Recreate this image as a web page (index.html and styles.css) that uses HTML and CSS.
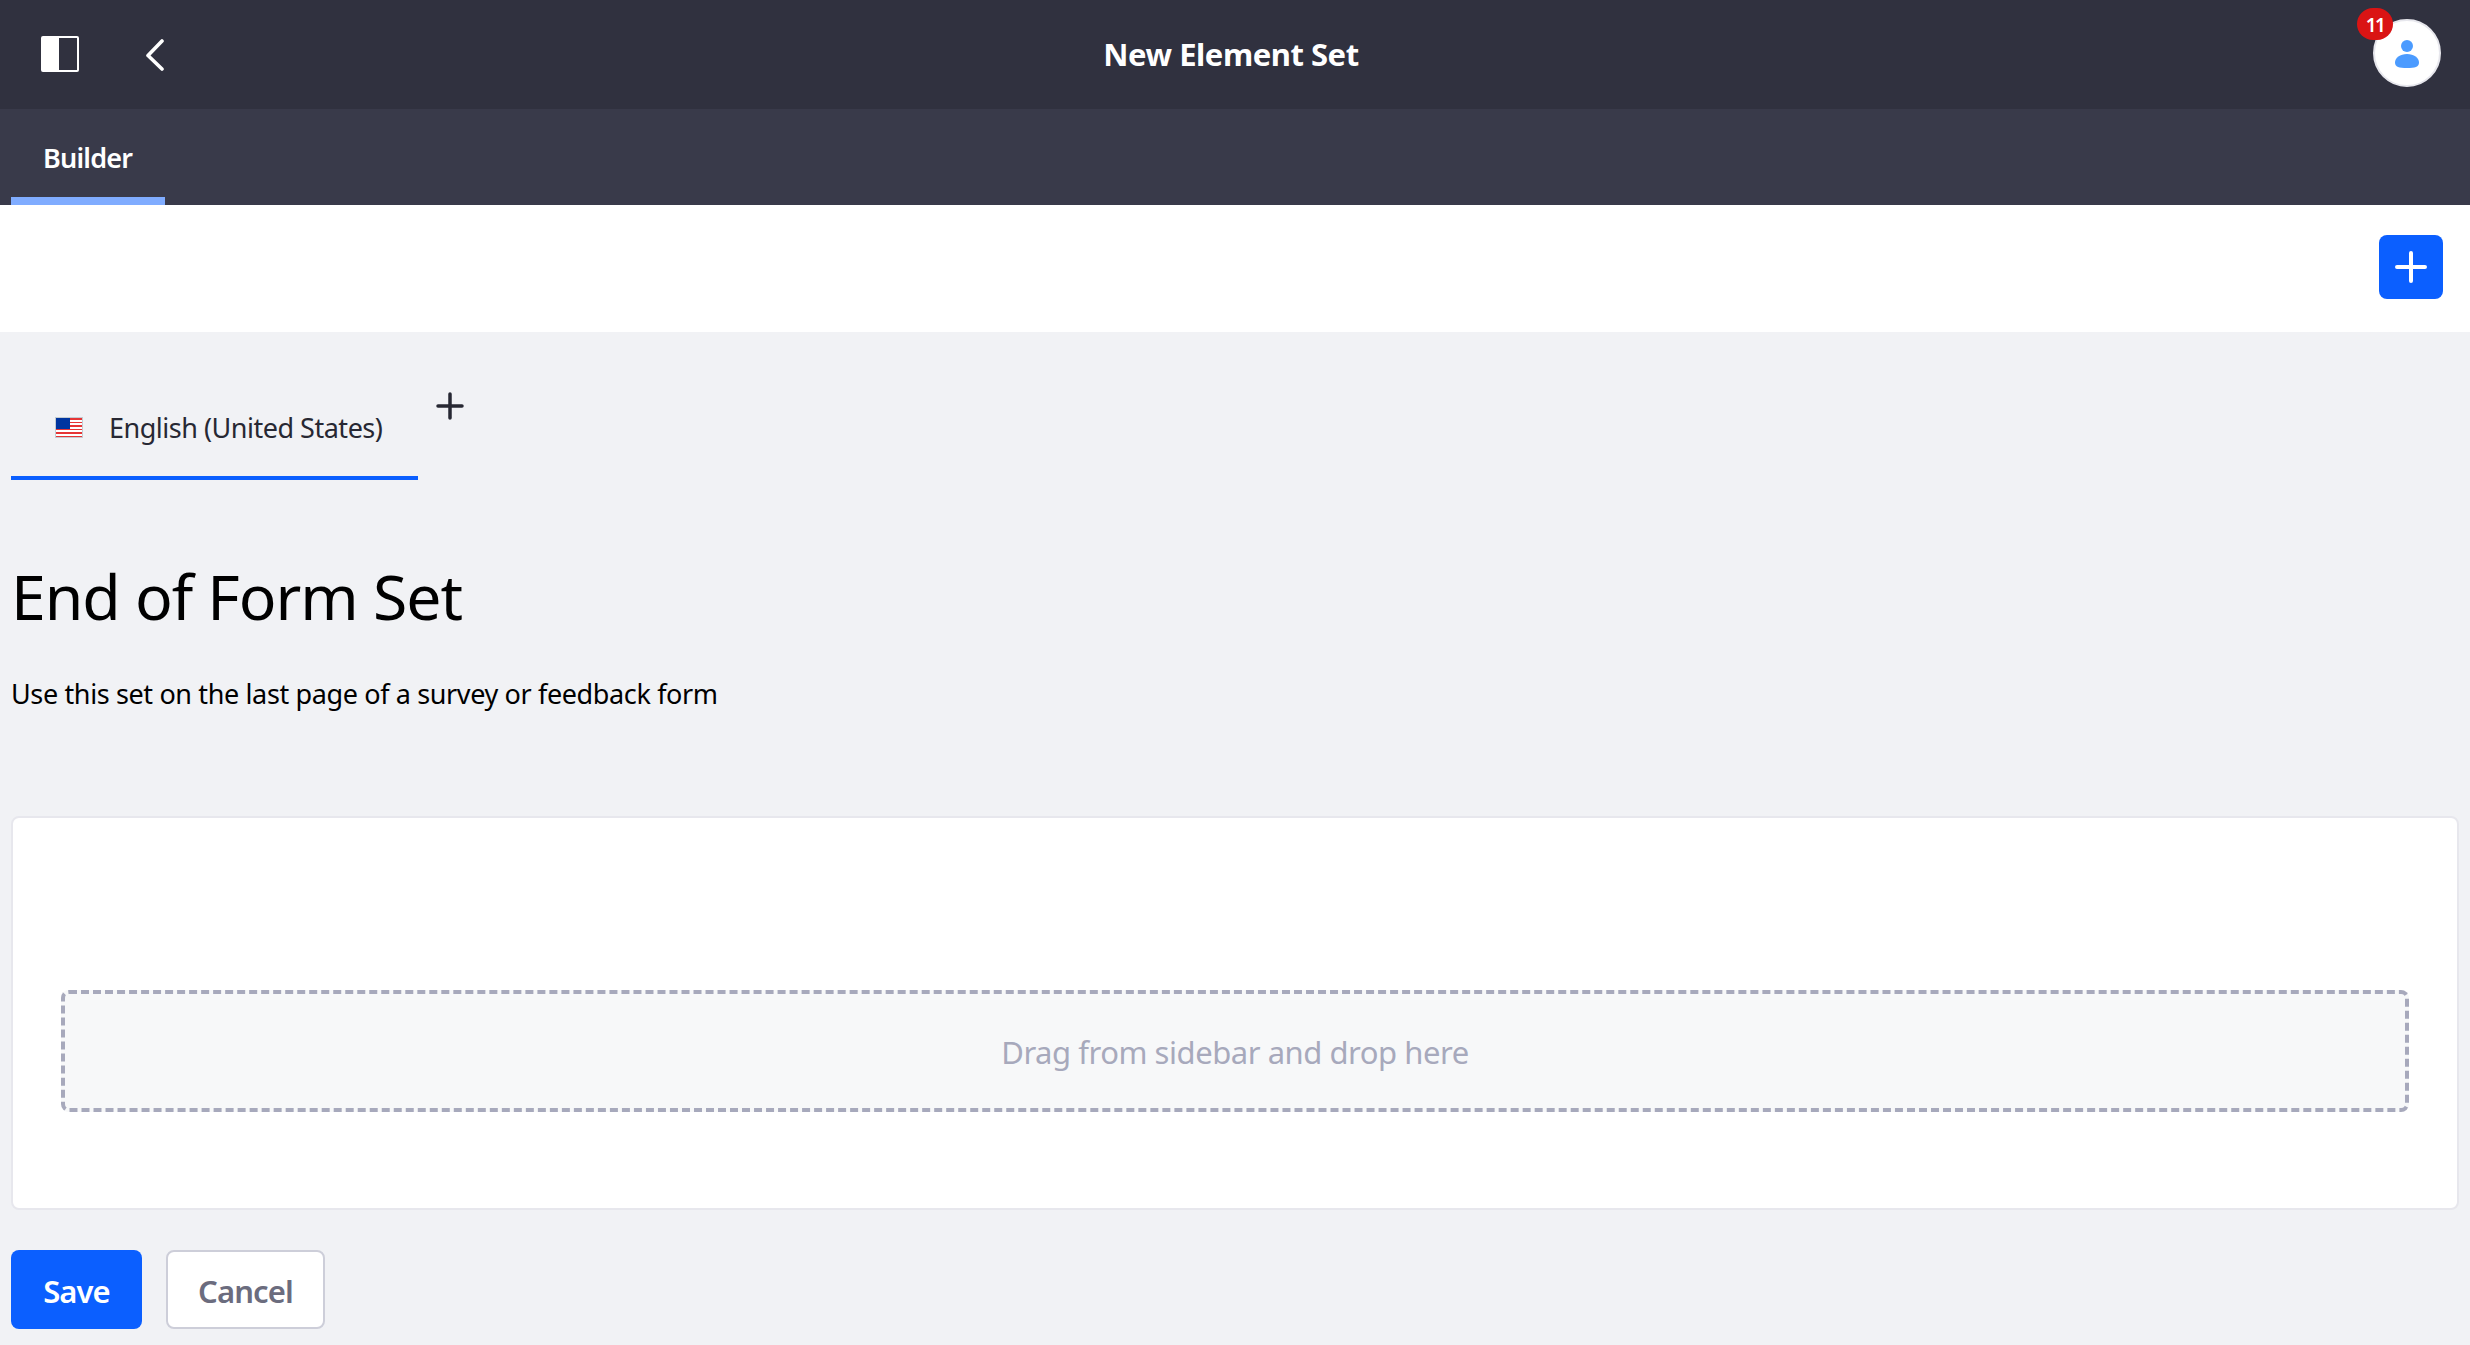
FILE: index.html
```html
<!DOCTYPE html>
<html lang="en">
<head>
<meta charset="utf-8">
<title>New Element Set</title>
<link rel="stylesheet" href="styles.css">
</head>
<body>
<header class="topbar">
  <div class="topbar-start">
    <svg class="icon-panel" width="38" height="36" viewBox="0 0 38 36"><rect x="1" y="1" width="36" height="34" rx="1" fill="none" stroke="#fff" stroke-width="2"/><path d="M1 1h17v34H1z" fill="#fff"/></svg>
    <svg class="icon-back" width="18" height="32" viewBox="0 0 18 32"><path d="M16 2 2 16.500l14 13.500" fill="none" stroke="#fff" stroke-width="3.6" stroke-linecap="round" stroke-linejoin="round"/></svg>
  </div>
  <h2 class="title">New Element Set</h2>
  <div class="topbar-end">
    <div class="avatar">
      <svg width="24" height="28" viewBox="0 0 24 28"><circle cx="12" cy="6" r="6" fill="#4b9bff"/><path d="M12 14c7 0 12 4 12 8.500C24 27 20 28 12 28S0 27 0 22.500C0 18 5 14 12 14z" fill="#4b9bff"/></svg>
      <span class="badge">11</span>
    </div>
  </div>
</header>
<nav class="tabs"><a class="tab">Builder</a></nav>
<div class="toolbar">
  <button class="add" aria-label="Add"><svg width="32" height="32" viewBox="0 0 32 32"><path d="M16 2v28M2 16h28" stroke="#fff" stroke-width="4" stroke-linecap="round"/></svg></button>
</div>
<main class="content">
  <div class="languages">
    <div class="language">
      <svg width="28" height="21" viewBox="0 0 28 21"><path fill="#c3ccd2" d="M0 0h28v21H0z"/><path fill="#fff" d="M1 1h26v19H1z"/><path stroke="#e63535" stroke-width="2" d="M1 2h26M1 9h26M1 16h26"/><path stroke="#e63535" stroke-width="1" d="M1 5.500h26M1 12.500h26M1 19.500h26"/><path fill="#0035a0" d="M1 1h14v11H1z"/></svg>
      <span>English (United States)</span>
    </div>
    <svg class="add-language" width="28" height="28" viewBox="0 0 28 28"><path d="M14 2v24M2 14h24" stroke="#272833" stroke-width="3.500" stroke-linecap="round"/></svg>
  </div>
  <h1 class="form-name">End of Form Set</h1>
  <p class="description">Use this set on the last page of a survey or feedback form</p>
  <section class="card"><div class="dropzone">Drag from sidebar and drop here</div></section>
  <div class="actions">
    <button class="btn save">Save</button>
    <button class="btn cancel">Cancel</button>
  </div>
</main>
</body>
</html>
```
FILE: styles.css
```css
* { box-sizing: border-box; }
body {
  margin: 0;
  min-height: 1345px;
  background: #f1f2f5;
  color: #000;
  font-family: "Noto Sans", "Open Sans", sans-serif;
}
svg { display: block; flex: none; }
button { font-family: inherit; padding: 0; border: 0; }

.topbar {
  height: 109px;
  background: #30313f;
  display: grid;
  grid-template-columns: 1fr auto 1fr;
  align-items: start;
}
.topbar-start { display: flex; padding-left: 41px; gap: 67px; }
.icon-panel { margin-top: 36px; }
.icon-back { margin-top: 39px; }
.title {
  margin: 0;
  padding-right: 8px;
  color: #fff;
  font-size: 31px;
  font-weight: 700;
  line-height: 109px;
  letter-spacing: -0.46px;
}
.topbar-end { display: flex; justify-content: flex-end; padding: 19px 29px 0 0; }
.avatar {
  position: relative;
  width: 68px;
  height: 68px;
  padding-top: 19px;
  border: 2px solid #e7e7ed;
  border-radius: 50%;
  background: #fff;
  display: flex;
  justify-content: center;
}
.badge {
  position: absolute;
  left: -18px;
  top: -13px;
  width: 36px;
  height: 32px;
  border-radius: 16px;
  background: #da1414;
  color: #fff;
  font-size: 19px;
  font-weight: 600;
  line-height: 34px;
  letter-spacing: -1.5px;
  text-align: center;
}

.tabs { height: 96px; background: #393a4a; padding-left: 11px; display: flex; }
.tab {
  width: 154px;
  padding-left: 32px;
  border-bottom: 8px solid #80acff;
  color: #fff;
  font-size: 27px;
  font-weight: 600;
  line-height: 97px;
  height: 96px;
  letter-spacing: -0.78px;
}

.toolbar {
  height: 127px;
  background: #fff;
  display: flex;
  justify-content: flex-end;
  padding: 30px 27px 0 0;
}
.add {
  width: 64px;
  height: 64px;
  border-radius: 8px;
  background: #0b5fff;
  display: grid;
  place-items: center;
}

.content { padding: 43px 11px 0; }
.languages { display: flex; align-items: flex-start; gap: 18px; }
.language {
  width: 407px;
  height: 105px;
  padding: 4px 0 0 44px;
  border-bottom: 4px solid #0b5fff;
  display: flex;
  align-items: center;
  gap: 26px;
  color: #272833;
  font-size: 27px;
  letter-spacing: -0.49px;
}
.add-language { margin-top: 17px; }
.form-name {
  margin: 76px 0 0;
  font-size: 62.5px;
  font-weight: 400;
  line-height: 80px;
  letter-spacing: -1.04px;
}
.description {
  margin: 37px 0 0;
  font-size: 27px;
  line-height: 42px;
  letter-spacing: -0.37px;
}
.card {
  height: 394px;
  margin-top: 101px;
  padding: 172px 48px 0;
  border: 2px solid #e7e7ed;
  border-radius: 8px;
  background: #fff;
}
.dropzone {
  height: 122px;
  padding-top: 2px;
  border: 4px dashed #a7a9bc;
  border-radius: 8px;
  background: #f7f8f9;
  color: #a7a9bc;
  font-size: 31px;
  line-height: 112px;
  letter-spacing: -0.46px;
  text-align: center;
}
.actions { display: flex; gap: 24px; margin-top: 40px; }
.btn {
  height: 79px;
  padding-top: 2px;
  border-radius: 8px;
  font-size: 31px;
  font-weight: 600;
  letter-spacing: -0.9px;
}
.save { width: 131px; background: #0b5fff; color: #fff; }
.cancel { width: 159px; border: 2px solid #cdced9; background: #fff; color: #6b6c7e; }
```
